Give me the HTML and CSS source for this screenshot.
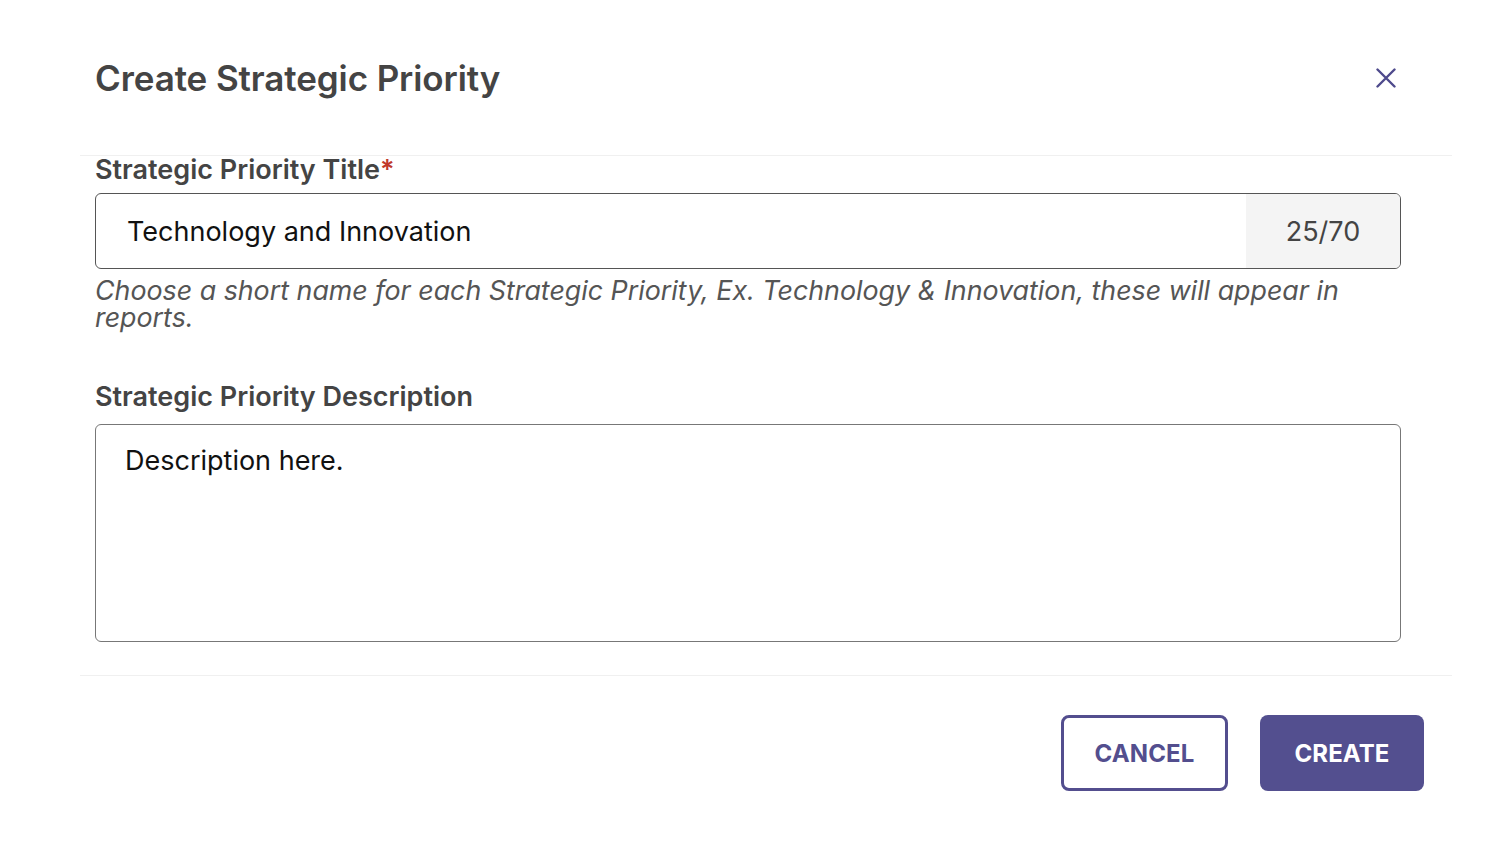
FILE: index.html
```html
<!DOCTYPE html>
<html>
<head>
<meta charset="utf-8">
<link rel="stylesheet" href="styles.css">
</head>
<body>
<div class="modal">
  <div class="header">
    <h1 class="title">Create Strategic Priority</h1>
    <button class="close" aria-label="Close">
      <svg width="20" height="20" viewBox="0 0 20 20"><path d="M1.5 1.5L18.5 18.5M18.5 1.5L1.5 18.5" stroke="#4e4a8c" stroke-width="2.4" stroke-linecap="round"/></svg>
    </button>
  </div>
  <div class="body">
    <div class="label">Strategic Priority Title<span class="req">*</span></div>
    <div class="input">
      <div class="input-text">Technology and Innovation</div>
      <div class="counter">25/70</div>
    </div>
    <div class="help">Choose a short name for each Strategic Priority, Ex. Technology &amp; Innovation, these will appear in reports.</div>
    <div class="label label-desc">Strategic Priority Description</div>
    <div class="textarea">Description here.</div>
  </div>
  <div class="footer">
    <button class="btn btn-outline">CANCEL</button>
    <button class="btn btn-primary">CREATE</button>
  </div>
</div>
</body>
</html>
```
FILE: styles.css
```css
* { box-sizing: border-box; }
html, body { margin: 0; padding: 0; background: #fff; }
body { font-family: Inter, "Noto Sans", sans-serif; width: 1496px; height: 854px; overflow: hidden; }
.modal { margin-left: 80px; width: 1372px; }
.header {
  height: 156px;
  display: flex;
  align-items: center;
  justify-content: space-between;
  padding: 0 56px 0 15px;
  border-bottom: 1px solid #f0f0f0;
}
.title { margin: 0; font-size: 35px; font-weight: 600; color: #444; letter-spacing: -0.1px; }
.close { background: none; border: 0; padding: 0; width: 20px; height: 20px; cursor: pointer; display: flex; }
.body { padding: 0 51px 0 15px; }
.label { font-size: 27px; font-weight: 600; color: #444; line-height: 28px; margin-top: 0; }
.req { color: #c0392b; }
.input {
  margin-top: 9px;
  height: 76px;
  border: 1px solid #555;
  border-radius: 6px;
  display: flex;
  overflow: hidden;
}
.input-text { flex: 1; display: flex; align-items: center; padding-left: 31px; font-size: 27px; color: #111; }
.counter { width: 154px; background: #f4f4f4; display: flex; align-items: center; justify-content: center; font-size: 27px; color: #444; }
.help { margin-top: 8px; font-size: 26.8px; font-style: italic; color: #555; line-height: 27px; }
.label-desc { margin-top: 52px; }
.textarea {
  margin-top: 13px;
  height: 218px;
  border: 1px solid #777;
  border-radius: 6px;
  padding: 20px 29px;
  font-size: 27px;
  line-height: 32px;
  color: #111;
}
.footer {
  margin-top: 33px;
  border-top: 1px solid #f0f0f0;
  padding: 39px 28px 0 0;
  display: flex;
  justify-content: flex-end;
  gap: 32px;
}
.btn {
  height: 76px;
  border-radius: 8px;
  font-family: Inter, "Noto Sans", sans-serif;
  font-size: 24px;
  font-weight: 700;
  letter-spacing: 0.1px;
  cursor: pointer;
}
.btn-outline { width: 167px; background: #fff; border: 3px solid #534e8e; color: #534e8e; }
.btn-primary { width: 164px; background: #534f8f; border: 0; color: #fff; }
```
